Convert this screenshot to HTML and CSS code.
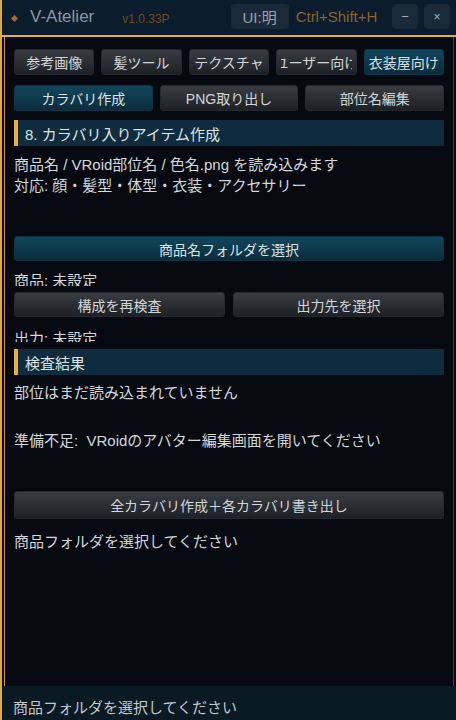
FILE: index.html
```html
<!DOCTYPE html>
<html lang="ja">
<head>
<meta charset="utf-8">
<link rel="stylesheet" href="styles.css">
</head>
<body>
<div class="app">
  <header class="titlebar">
    <span class="diamond"></span>
    <span class="title">V-Atelier</span>
    <span class="version">v1.0.33P</span>
    <span class="ui-btn">UI:明</span>
    <span class="hotkey">Ctrl+Shift+H</span>
    <span class="win-btn">−</span>
    <span class="win-btn close">×</span>
  </header>
  <main class="panel">
    <div class="tabs5">
      <div class="btn"><span class="clip"><span class="lbl">参考画像</span></span></div>
      <div class="btn"><span class="clip"><span class="lbl">髪ツール</span></span></div>
      <div class="btn"><span class="clip"><span class="lbl">テクスチャ</span></span></div>
      <div class="btn"><span class="clip"><span class="lbl">ユーザー向け</span></span></div>
      <div class="btn active"><span class="clip"><span class="lbl">衣装屋向け</span></span></div>
    </div>
    <div class="tabs3">
      <div class="btn active"><span class="lbl">カラバリ作成</span></div>
      <div class="btn"><span class="lbl">PNG取り出し</span></div>
      <div class="btn"><span class="lbl">部位名編集</span></div>
    </div>
    <div class="section">8. カラバリ入りアイテム作成</div>
    <div class="desc">
      <p>商品名 / VRoid部位名 / 色名.png を読み込みます</p>
      <p>対応: 顔・髪型・体型・衣装・アクセサリー</p>
    </div>
    <div class="btn active wide"><span class="lbl">商品名フォルダを選択</span></div>
    <div class="clip-label first">商品: 未設定</div>
    <div class="pair">
      <div class="btn"><span class="lbl">構成を再検査</span></div>
      <div class="btn"><span class="lbl">出力先を選択</span></div>
    </div>
    <div class="clip-label second">出力: 未設定</div>
    <div class="section tight">検査結果</div>
    <p class="line parts">部位はまだ読み込まれていません</p>
    <p class="line ready">準備不足:&nbsp;&nbsp;VRoidのアバター編集画面を開いてください</p>
    <div class="btn big"><span class="lbl">全カラバリ作成＋各カラバリ書き出し</span></div>
    <p class="line hint">商品フォルダを選択してください</p>
  </main>
  <footer class="status">商品フォルダを選択してください</footer>
</div>
</body>
</html>
```
FILE: styles.css
```css
* { box-sizing: border-box; }
html, body { margin: 0; padding: 0; }
body {
  width: 456px;
  height: 720px;
  background: #070b12;
  font-family: "Liberation Sans", "Noto Sans CJK JP", sans-serif;
  color: #d4d8dc;
  overflow: hidden;
}
.app {
  height: 720px;
  display: flex;
  flex-direction: column;
  border-left: 2px solid #e6a838;
}
.titlebar {
  height: 37px;
  flex: none;
  background: #0b1c2c;
  border-bottom: 2px solid #e8ac3c;
  display: flex;
  align-items: center;
  padding: 0 6px 0 10px;
}
.diamond {
  width: 5px;
  height: 5px;
  background: #b06a22;
  transform: rotate(45deg);
  margin-top: 2px;
}
.title {
  margin-left: 13px;
  font-size: 17px;
  color: #8e979f;
  margin-top: -1px;
}
.version {
  margin-left: 28px;
  font-size: 12px;
  color: #6e4e20;
  margin-top: 3px;
}
.ui-btn {
  margin-left: 61px;
  width: 58px;
  height: 25px;
  border-radius: 4px;
  background: #1a2a39;
  color: #9aa2aa;
  font-size: 15px;
  display: flex;
  align-items: center;
  justify-content: center;
  margin-top: -2px;
}
.hotkey {
  margin-left: 7px;
  font-size: 15px;
  color: #8a6426;
  margin-top: -2px;
}
.win-btn {
  margin-left: auto;
  width: 26px;
  height: 25px;
  border-radius: 4px;
  background: #1a2a39;
  color: #a6aeb6;
  font-size: 13px;
  display: flex;
  align-items: center;
  justify-content: center;
  margin-top: -2px;
}
.win-btn.close {
  margin-left: 6px;
  font-size: 12px;
}
.panel {
  flex: 1;
  margin: 0 2px;
  background: #060a10;
  border-left: 1px solid #d4982e;
  border-right: 1px solid #4c4222;
  padding: 12px 9px 0;
  display: flex;
  flex-direction: column;
}
.btn {
  height: 26px;
  border-radius: 3px;
  background: linear-gradient(#393d42, #1d2125);
  border: 1px solid #25292d;
  display: flex;
  align-items: center;
  justify-content: center;
  overflow: hidden;
  font-size: 14px;
  color: #d2d6da;
  white-space: nowrap;
}
.btn .lbl {
  flex: none;
}
.btn.active {
  background: linear-gradient(#11465c, #0b2c3c);
  border-color: #0e3446;
  color: #dde3e8;
}
.tabs5 {
  display: grid;
  grid-template-columns: repeat(5, 1fr);
  gap: 7px;
}
.tabs5 .btn {
  padding: 0 4px;
}
.clip {
  flex: 1;
  min-width: 0;
  display: flex;
  justify-content: center;
  overflow: hidden;
}
.tabs3 {
  margin-top: 10px;
  display: grid;
  grid-template-columns: repeat(3, 1fr);
  gap: 7px;
}
.section {
  margin-top: 9px;
  height: 26px;
  background: #0e2c3e;
  border-left: 4px solid #e8ae3e;
  padding-left: 7px;
  display: flex;
  align-items: center;
  font-size: 15px;
  color: #dfe4e8;
}
.section.tight {
  margin-top: 7px;
}
.desc {
  margin-top: 8px;
}
.desc p, .line {
  margin: 0;
  font-size: 15px;
  line-height: 21px;
  color: #d4d8dc;
}
.wide {
  margin-top: 40px;
  height: 25px;
}
.clip-label {
  font-size: 15px;
  line-height: 24px;
  overflow: hidden;
  color: #d4d8dc;
  flex: none;
}
.clip-label.first {
  margin-top: 8px;
  height: 17px;
  margin-bottom: 6px;
}
.clip-label.second {
  margin-top: 10px;
  height: 15px;
}
.pair {
  display: grid;
  grid-template-columns: 1fr 1fr;
  gap: 8px;
}
.pair .btn {
  height: 25px;
}
.line.parts {
  margin-top: 7px;
}
.line.ready {
  margin-top: 27px;
}
.big {
  margin-top: 40px;
  height: 28px;
}
.line.hint {
  margin-top: 12px;
}
.status {
  flex: none;
  height: 34px;
  background: #0a1a25;
  padding-left: 11px;
  display: flex;
  align-items: center;
  padding-top: 6px;
  font-size: 15px;
  color: #c2c8ce;
}
```
